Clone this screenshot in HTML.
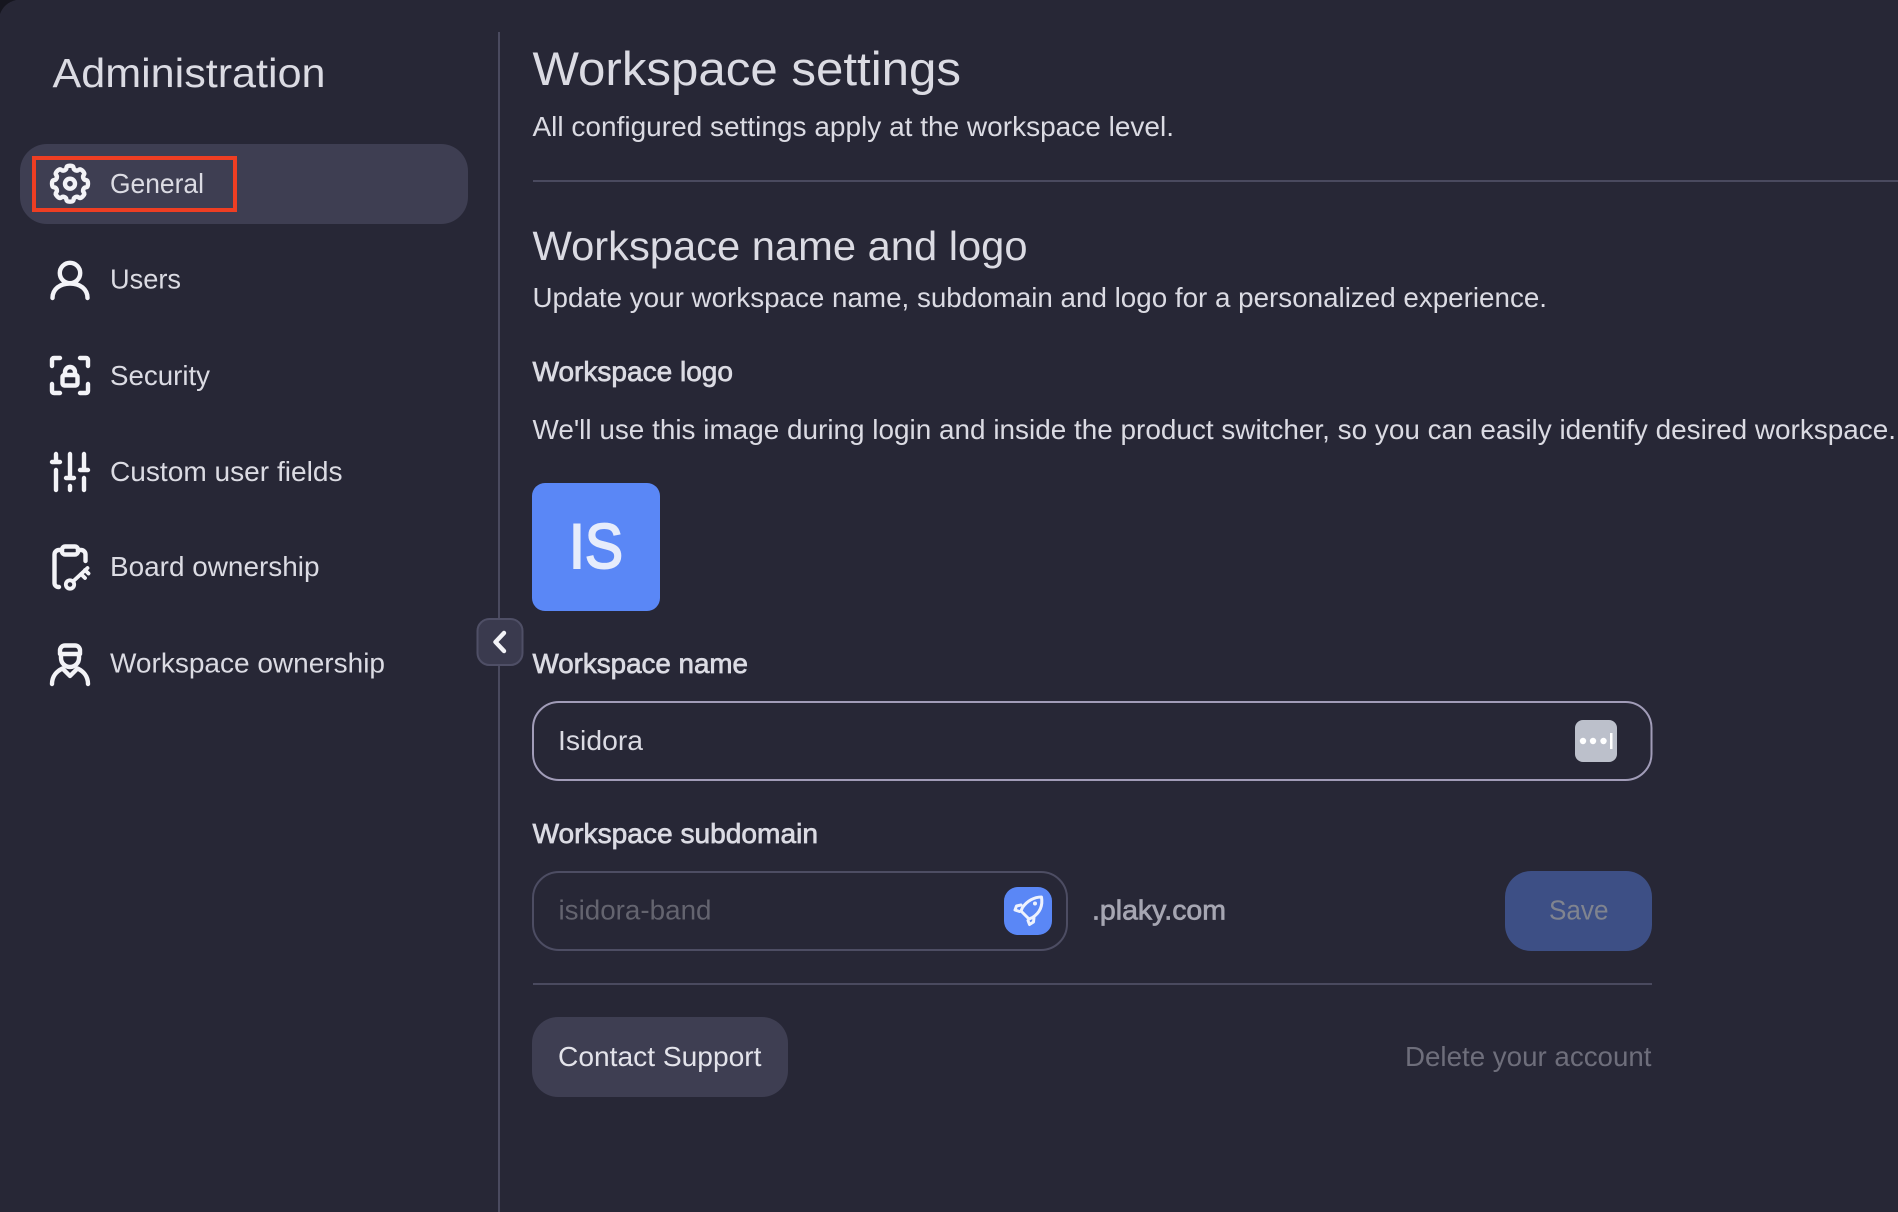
<!DOCTYPE html>
<html lang="en">
<head>
<meta charset="utf-8">
<title>Workspace settings</title>
<style>
html,body{margin:0;padding:0;width:1898px;height:1212px;overflow:hidden;background:#272736}
svg{display:block}
text{font-family:"Liberation Sans",Arial,sans-serif;fill:#dbdbe3}
.b{font-size:27.5px}
.m{font-size:27.5px;stroke:#dbdbe3;stroke-width:.7px}
.h{font-size:41px}
.i{fill:none;stroke:#f3f3f7;stroke-width:4.4;stroke-linecap:round;stroke-linejoin:round}
</style>
</head>
<body>
<svg width="1898" height="1212" viewBox="0 0 1898 1212" xmlns="http://www.w3.org/2000/svg">
<rect width="1898" height="1212" fill="#272736"/>
<path d="M0 0H16Q4 3 0 14Z" fill="#16161f"/>

<!-- sidebar -->
<text class="h" x="52.5" y="87" textLength="273" lengthAdjust="spacingAndGlyphs">Administration</text>
<rect x="20" y="144" width="448" height="80" rx="27" fill="#3e3e52"/>
<rect x="34" y="158" width="201" height="52" fill="none" stroke="#ee3e23" stroke-width="4"/>
<rect x="498" y="32" width="2" height="1180" fill="#4a4a5f"/>

<text class="b" x="110" y="193" textLength="94" lengthAdjust="spacingAndGlyphs">General</text>
<text class="b" x="110" y="288.500" textLength="71" lengthAdjust="spacingAndGlyphs">Users</text>
<text class="b" x="110" y="385" textLength="100" lengthAdjust="spacingAndGlyphs">Security</text>
<text class="b" x="110" y="481" textLength="232.500" lengthAdjust="spacingAndGlyphs">Custom user fields</text>
<text class="b" x="110" y="576" textLength="209.500" lengthAdjust="spacingAndGlyphs">Board ownership</text>
<text class="b" x="110" y="672.500" textLength="275" lengthAdjust="spacingAndGlyphs">Workspace ownership</text>

<!-- gear -->
<g class="i" transform="translate(70 183.7)">
<circle r="5"/>
<path d="M-5.55-13.4C-4-14-3.6-15-3.6-16Q-3.4-18 0-18Q3.4-18 3.6-16C3.6-15 4-14 5.55-13.4"/>
<path transform="rotate(45)" d="M-5.55-13.4C-4-14-3.6-15-3.6-16Q-3.4-18 0-18Q3.4-18 3.6-16C3.6-15 4-14 5.55-13.4"/>
<path transform="rotate(90)" d="M-5.55-13.4C-4-14-3.6-15-3.6-16Q-3.4-18 0-18Q3.4-18 3.6-16C3.6-15 4-14 5.55-13.4"/>
<path transform="rotate(135)" d="M-5.55-13.4C-4-14-3.6-15-3.6-16Q-3.4-18 0-18Q3.4-18 3.6-16C3.6-15 4-14 5.55-13.4"/>
<path transform="rotate(180)" d="M-5.55-13.4C-4-14-3.6-15-3.6-16Q-3.4-18 0-18Q3.4-18 3.6-16C3.6-15 4-14 5.55-13.4"/>
<path transform="rotate(225)" d="M-5.55-13.4C-4-14-3.6-15-3.6-16Q-3.4-18 0-18Q3.4-18 3.6-16C3.6-15 4-14 5.55-13.4"/>
<path transform="rotate(270)" d="M-5.55-13.4C-4-14-3.6-15-3.6-16Q-3.4-18 0-18Q3.4-18 3.6-16C3.6-15 4-14 5.55-13.4"/>
<path transform="rotate(315)" d="M-5.55-13.4C-4-14-3.6-15-3.6-16Q-3.4-18 0-18Q3.4-18 3.6-16C3.6-15 4-14 5.55-13.4"/>
</g>

<!-- user -->
<g class="i">
<circle cx="70" cy="273" r="10.2"/>
<path d="M52.500 298C52.500 289 60 283.500 70 283.500S87.500 289 87.500 298"/>
</g>

<!-- security -->
<g class="i">
<path d="M60 358H54Q52 358 52 360V366M80 358H86Q88 358 88 360V366M52 384V391Q52 393 54 393H60M88 384V391Q88 393 86 393H80"/>
<rect x="62.500" y="375" width="15" height="10.500" rx="2"/>
<path d="M65 375V372A5 5 0 0 1 75 372V375"/>
</g>

<!-- sliders -->
<g class="i" stroke-width="4.6">
<path d="M56 454V461M52 462H60M56 470V490"/>
<path d="M70 454V477M66 478H74M70 486V490"/>
<path d="M84 454V469M80 470H88M84 478V490"/>
</g>

<!-- board ownership -->
<g class="i">
<rect x="62" y="546.500" width="16" height="8" rx="3"/>
<path d="M62 550H59A4.500 4.500 0 0 0 54.500 554.500V583A4 4 0 0 0 58.500 587H59M78 550H81A4.500 4.500 0 0 1 85.500 554.500V561"/>
</g>
<g fill="none" stroke="#f3f3f7" stroke-width="3.800" stroke-linecap="round">
<circle cx="70" cy="584.500" r="4.200"/>
<path d="M73.500 581L87.500 568M81 574L85 578M85 570L88.500 573.500"/>
</g>

<!-- workspace ownership -->
<g class="i" stroke-width="4">
<path d="M60 654V650A5 5 0 0 1 65 645.500H75A5 5 0 0 1 80 650V654Z"/>
<path d="M61 654V658A9 9 0 0 0 79 658V654"/>
<path d="M52 684C52 676 57 671 62.500 668.500L70 676L77.500 668.500C83 671 88 676 88 684"/>
</g>

<!-- collapse -->
<rect x="477.500" y="619" width="45" height="46" rx="12" fill="#3a3a4e" stroke="#4f4f66" stroke-width="2"/>
<path class="i" d="M504 633L495.500 642L504 651" stroke="#ffffff"/>

<!-- main headings -->
<text x="532.500" y="85" font-size="47.500" textLength="428.500" lengthAdjust="spacingAndGlyphs">Workspace settings</text>
<text class="b" x="532.500" y="136" textLength="641.500" lengthAdjust="spacingAndGlyphs">All configured settings apply at the workspace level.</text>
<rect x="533" y="180" width="1365" height="2" fill="#4a4a5f"/>
<text class="h" x="532.500" y="260" textLength="495" lengthAdjust="spacingAndGlyphs">Workspace name and logo</text>
<text class="b" x="532.500" y="307" textLength="1014.500" lengthAdjust="spacingAndGlyphs">Update your workspace name, subdomain and logo for a personalized experience.</text>
<text class="m" x="532.500" y="381" textLength="200.500" lengthAdjust="spacingAndGlyphs">Workspace logo</text>
<text class="b" x="532.500" y="439" textLength="1363.500" lengthAdjust="spacingAndGlyphs">We'll use this image during login and inside the product switcher, so you can easily identify desired workspace.</text>

<!-- logo -->
<rect x="532" y="483" width="128" height="128" rx="13" fill="#5a87f6"/>
<text x="569" y="568" font-size="63" textLength="54" lengthAdjust="spacingAndGlyphs" style="fill:#e6ecfb;stroke:#e6ecfb;stroke-width:2">IS</text>

<!-- workspace name -->
<text class="m" x="532.500" y="673" textLength="215.500" lengthAdjust="spacingAndGlyphs">Workspace name</text>
<rect x="533" y="702" width="1118.500" height="78" rx="26" fill="none" stroke="#a19cb8" stroke-width="2"/>
<text class="b" x="558" y="750" textLength="85" lengthAdjust="spacingAndGlyphs">Isidora</text>
<rect x="1575" y="720" width="42" height="42" rx="8" fill="#bcc0cb"/>
<g fill="#ffffff"><circle cx="1583" cy="741" r="3.200"/><circle cx="1593" cy="741" r="3.200"/><circle cx="1603.500" cy="741" r="3.200"/><rect x="1610" y="733" width="2.500" height="16"/></g>

<!-- subdomain -->
<text class="m" x="532.500" y="843" textLength="285.500" lengthAdjust="spacingAndGlyphs">Workspace subdomain</text>
<rect x="533" y="872" width="534" height="78" rx="26" fill="none" stroke="#4d4d63" stroke-width="2"/>
<text class="b" x="558.500" y="919.500" textLength="153" lengthAdjust="spacingAndGlyphs" style="fill:#64646f">isidora-band</text>
<rect x="1004" y="887" width="48" height="48" rx="14" fill="#5a87f6"/>
<g fill="none" stroke="#eef2fd" stroke-width="3" stroke-linejoin="round" stroke-linecap="round">
<path d="M1041.500 897C1034 897 1027 901 1022.500 907.500L1021 911L1029 919L1032.500 917.500C1039.500 913 1043 906 1041.500 897Z"/>
<path d="M1021 905L1016.500 906L1015 910L1019.500 911.500M1034 917.500L1033.500 922L1029.500 924.500L1028 920.500"/>
</g>
<circle cx="1035" cy="903.500" r="2" fill="#eef2fd"/>
<text class="m" x="1092" y="919.500" textLength="134" lengthAdjust="spacingAndGlyphs" style="fill:#a6a6b2;stroke:#a6a6b2">.plaky.com</text>
<rect x="1505" y="871" width="147" height="80" rx="26" fill="#3d4f85"/>
<text class="b" x="1549" y="919.500" textLength="59.500" lengthAdjust="spacingAndGlyphs" style="fill:#80848f">Save</text>

<rect x="533" y="983" width="1119" height="2" fill="#4a4a5f"/>

<!-- footer -->
<rect x="532" y="1017" width="256" height="80" rx="26" fill="#3e3e52"/>
<text class="b" x="558" y="1066" textLength="203.500" lengthAdjust="spacingAndGlyphs" style="fill:#e3e3ea">Contact Support</text>
<text class="b" x="1405" y="1066" textLength="246.500" lengthAdjust="spacingAndGlyphs" style="fill:#6e6e7b">Delete your account</text>
</svg>
</body>
</html>
